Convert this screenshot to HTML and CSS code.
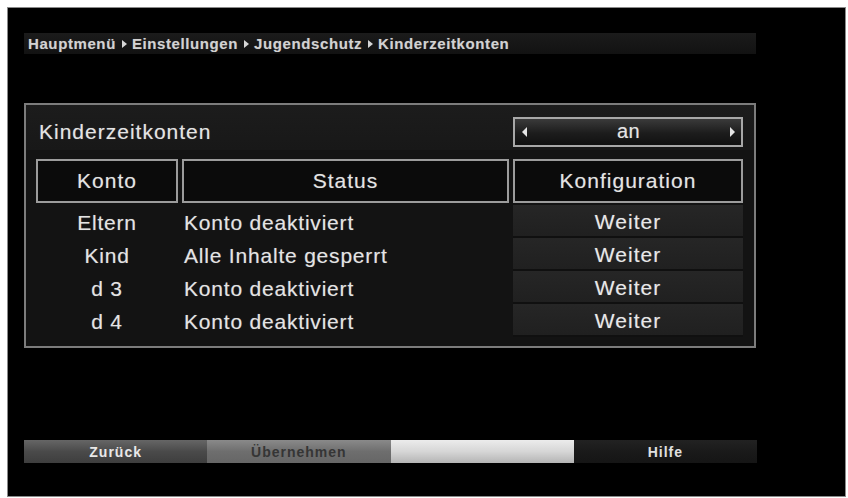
FILE: index.html
```html
<!DOCTYPE html>
<html lang="de">
<head>
<meta charset="utf-8">
<title>Kinderzeitkonten</title>
<link rel="stylesheet" href="styles.css">
</head>
<body>
<div class="screen">
  <div class="crumbs">
    <span>Hauptmenü</span><span class="sep"></span><span>Einstellungen</span><span class="sep"></span><span>Jugendschutz</span><span class="sep"></span><span>Kinderzeitkonten</span>
  </div>
  <div class="panel">
    <div class="band">
      <div class="title">Kinderzeitkonten</div>
      <div class="select">
        <span class="arr arr-l"></span>
        <span class="sel-val">an</span>
        <span class="arr arr-r"></span>
      </div>
    </div>
    <div class="table">
      <div class="row head">
        <div class="hcell">Konto</div>
        <div class="hcell">Status</div>
        <div class="hcell">Konfiguration</div>
      </div>
      <div class="row item">
        <div class="c-konto">Eltern</div>
        <div class="c-status">Konto deaktiviert</div>
        <div class="c-btn">Weiter</div>
      </div>
      <div class="row item">
        <div class="c-konto">Kind</div>
        <div class="c-status">Alle Inhalte gesperrt</div>
        <div class="c-btn">Weiter</div>
      </div>
      <div class="row item">
        <div class="c-konto">d 3</div>
        <div class="c-status">Konto deaktiviert</div>
        <div class="c-btn">Weiter</div>
      </div>
      <div class="row item">
        <div class="c-konto">d 4</div>
        <div class="c-status">Konto deaktiviert</div>
        <div class="c-btn">Weiter</div>
      </div>
    </div>
  </div>
  <div class="footer">
    <div class="fbtn f-red">Zurück</div>
    <div class="fbtn f-green">Übernehmen</div>
    <div class="fbtn f-yellow"></div>
    <div class="fbtn f-blue">Hilfe</div>
  </div>
</div>
</body>
</html>
```
FILE: styles.css
```css
* { box-sizing: border-box; }

html, body {
  margin: 0;
  padding: 0;
  background: #ffffff;
}

body {
  font-family: "Liberation Sans", Arial, sans-serif;
  color: #e4e4e4;
}

.screen {
  margin: 7px 0 0 7px;
  width: 839px;
  height: 490px;
  background: #000;
  border: 1px solid #8a8a8a;
  padding: 25px 0 0 16px;
}

.crumbs {
  width: 732px;
  height: 21px;
  background: linear-gradient(#1b1b1b, #121212);
  display: flex;
  align-items: center;
  padding-left: 4px;
  font-size: 15px;
  font-weight: bold;
  letter-spacing: 0.6px;
  color: #d2d2d2;
  text-shadow: 0 0 1px rgba(255, 255, 255, 0.3);
}

.sep {
  display: inline-block;
  width: 0;
  height: 0;
  border-left: 5px solid #d6d6d6;
  border-top: 4px solid transparent;
  border-bottom: 4px solid transparent;
  margin: 0 5px 0 6px;
}

.panel {
  margin-top: 49px;
  width: 732px;
  border: 2px solid #7c7c7c;
  background: #131313;
  padding-bottom: 9px;
}

.band {
  display: flex;
  justify-content: space-between;
  align-items: center;
  padding: 12px 11px 3px 10px;
  background: linear-gradient(#1c1c1c, #181818);
}

.title {
  padding-left: 3px;
  font-size: 21px;
  letter-spacing: 1px;
  text-shadow: 0 0 1px rgba(255, 255, 255, 0.35);
}

.select {
  width: 230px;
  height: 30px;
  border: 2px solid #a8a8a8;
  background: linear-gradient(#3a3a3a, #1c1c1c 55%, #111);
  display: flex;
  align-items: center;
  padding: 0 6px 0 7px;
}

.sel-val {
  flex: 1;
  text-align: center;
  font-size: 20px;
  letter-spacing: 0.5px;
  padding-bottom: 1px;
  text-shadow: 0 0 1px rgba(255, 255, 255, 0.35);
}

.arr {
  width: 0;
  height: 0;
  border-top: 5px solid transparent;
  border-bottom: 5px solid transparent;
}
.arr-l { border-right: 5px solid #e6e6e6; }
.arr-r { border-left: 5px solid #e6e6e6; }

.table {
  padding: 9px 11px 0 10px;
}

.row {
  display: grid;
  grid-template-columns: 142px 327px 230px;
  column-gap: 4px;
}

.head {
  height: 44px;
  margin-bottom: 2px;
}

.hcell {
  border: 2px solid #9c9c9c;
  background: #0b0b0b;
  display: flex;
  align-items: center;
  justify-content: center;
  font-size: 21px;
  letter-spacing: 1px;
  text-shadow: 0 0 1px rgba(255, 255, 255, 0.35);
}

.item {
  height: 33px;
  align-items: center;
  font-size: 21px;
  letter-spacing: 0.8px;
  text-shadow: 0 0 1px rgba(255, 255, 255, 0.35);
}

.c-konto {
  text-align: center;
  padding-top: 3px;
}

.c-status {
  padding-left: 2px;
  padding-top: 3px;
}

.c-btn {
  height: 33px;
  background: linear-gradient(#262626, #202020);
  border-bottom: 2px solid #101010;
  display: flex;
  align-items: center;
  justify-content: center;
  font-size: 21px;
  letter-spacing: 1px;
  color: #e8e8e8;
  padding-top: 2px;
}

.footer {
  margin-top: 92px;
  width: 733px;
  height: 23px;
  display: grid;
  grid-template-columns: repeat(4, 1fr);
}

.fbtn {
  display: flex;
  align-items: center;
  justify-content: center;
  font-size: 14px;
  font-weight: bold;
  letter-spacing: 1px;
}

.f-red {
  background: linear-gradient(#666, #4a4a4a 50%, #3e3e3e);
  color: #e8e8e8;
}

.f-green {
  background: linear-gradient(#8a8a8a, #6e6e6e 50%, #666);
  color: #353535;
}

.f-yellow {
  background: linear-gradient(#ececec, #d6d6d6 50%, #b4b4b4);
}

.f-blue {
  background: linear-gradient(#222, #1a1a1a 50%, #151515);
  color: #e0e0e0;
}
```
